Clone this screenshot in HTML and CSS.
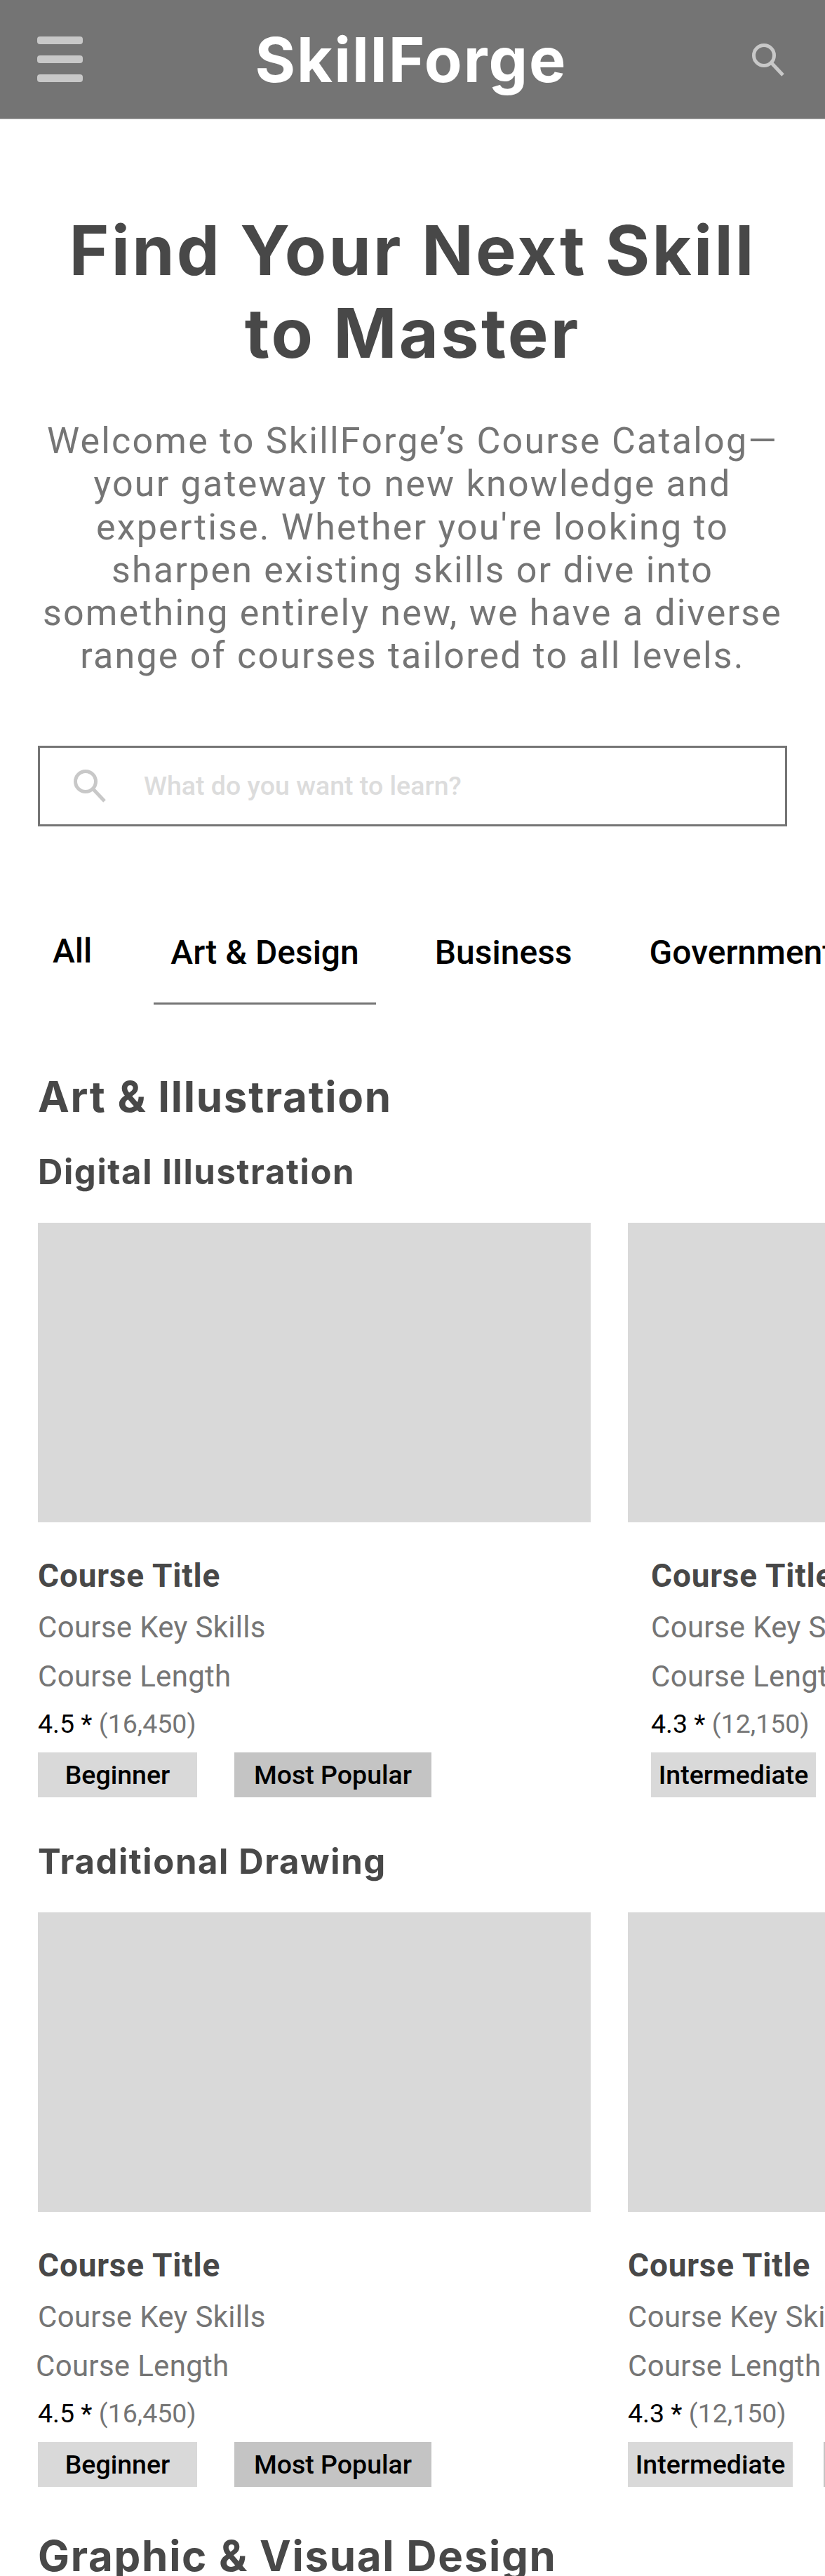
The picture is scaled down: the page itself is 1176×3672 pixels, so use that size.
FILE: index.html
```html
<!DOCTYPE html>
<html lang="en">
<head>
    <meta charset="UTF-8">
    <meta name="viewport" content="width=device-width, initial-scale=1.0">
    <title>SkillForge - Course Catalog</title>
    <link rel="stylesheet" href="styles.css">
</head>
<body>
    <header class="topbar">
        <button class="menu-btn" aria-label="Menu">
            <span></span>
            <span></span>
            <span></span>
        </button>
        <a href="#" class="logo">SkillForge</a>
        <svg class="topbar-search" viewBox="0 0 50 50" width="50" height="50" aria-label="Search">
            <circle cx="19" cy="19" r="14.5"></circle>
            <line x1="29.5" y1="29.5" x2="46" y2="47"></line>
        </svg>
    </header>

    <main>
        <section class="hero">
            <h1>Find Your Next Skill<br>to Master</h1>
            <p>Welcome to SkillForge’s Course Catalog—<br>your gateway to new knowledge and<br>expertise. Whether you're looking to<br>sharpen existing skills or dive into<br>something entirely new, we have a diverse<br>range of courses tailored to all levels.</p>
        </section>

        <form class="search-box">
            <svg viewBox="0 0 50 50" width="50" height="50">
                <circle cx="19" cy="19" r="14.5"></circle>
                <line x1="29.5" y1="29.5" x2="46" y2="47"></line>
            </svg>
            <input type="text" placeholder="What do you want to learn?">
        </form>

        <nav class="tabs">
            <a href="#" class="tab tab-all">All</a>
            <a href="#" class="tab tab-active">Art &amp; Design</a>
            <a href="#" class="tab">Business</a>
            <a href="#" class="tab">Government</a>
        </nav>

        <section class="category">
            <h2>Art &amp; Illustration</h2>

            <h3>Digital Illustration</h3>
            <div class="course-row">
                <article class="course-card">
                    <div class="course-thumb"></div>
                    <div class="course-info">
                        <h4>Course Title</h4>
                        <p class="course-meta">Course Key Skills</p>
                        <p class="course-meta">Course Length</p>
                        <p class="course-rating">4.5 * <span>(16,450)</span></p>
                        <div class="course-tags">
                            <span class="tag tag-level">Beginner</span>
                            <span class="tag tag-popular">Most Popular</span>
                        </div>
                    </div>
                </article>
                <article class="course-card">
                    <div class="course-thumb"></div>
                    <div class="course-info course-info-inset">
                        <h4>Course Title</h4>
                        <p class="course-meta">Course Key Skills</p>
                        <p class="course-meta">Course Length</p>
                        <p class="course-rating">4.3 * <span>(12,150)</span></p>
                        <div class="course-tags">
                            <span class="tag tag-level tag-tight">Intermediate</span>
                        </div>
                    </div>
                </article>
            </div>

            <h3>Traditional Drawing</h3>
            <div class="course-row">
                <article class="course-card">
                    <div class="course-thumb"></div>
                    <div class="course-info">
                        <h4>Course Title</h4>
                        <p class="course-meta">Course Key Skills</p>
                        <p class="course-meta course-meta-shift">Course Length</p>
                        <p class="course-rating">4.5 * <span>(16,450)</span></p>
                        <div class="course-tags">
                            <span class="tag tag-level">Beginner</span>
                            <span class="tag tag-popular">Most Popular</span>
                        </div>
                    </div>
                </article>
                <article class="course-card">
                    <div class="course-thumb"></div>
                    <div class="course-info">
                        <h4>Course Title</h4>
                        <p class="course-meta">Course Key Skills</p>
                        <p class="course-meta">Course Length</p>
                        <p class="course-rating">4.3 * <span>(12,150)</span></p>
                        <div class="course-tags course-tags-tight">
                            <span class="tag tag-level tag-tight">Intermediate</span>
                            <span class="tag tag-popular">Most Popular</span>
                        </div>
                    </div>
                </article>
            </div>
        </section>

        <section class="category">
            <h2>Graphic &amp; Visual Design</h2>
        </section>
    </main>
</body>
</html>
```

FILE: styles.css
```css
:root {
    --header: #747474;
    --heading: #484848;
    --muted: #757575;
    --placeholder: #dcdcdc;
    --icon: #c8c8c8;
    --thumb: #d9d9d9;
    --tag-dark: #c4c4c4;
}

* {
    margin: 0;
    padding: 0;
    box-sizing: border-box;
}

html, body {
    height: 3672px;
    overflow: hidden;
}

body {
    font-family: Roboto, sans-serif;
    background: #ffffff;
    color: #000000;
}

.topbar {
    height: 170px;
    background: var(--header);
    border-bottom: 1px solid #adadad;
    display: flex;
    align-items: center;
    justify-content: space-between;
    padding: 0 56px 0 53px;
}

.menu-btn {
    width: 65px;
    background: none;
    border: none;
    display: flex;
    flex-direction: column;
    gap: 16px;
}

.menu-btn span {
    display: block;
    height: 11px;
    border-radius: 4px;
    background: var(--icon);
}

.logo {
    font-family: Inter, sans-serif;
    font-size: 88px;
    font-weight: 700;
    letter-spacing: 2px;
    color: #ffffff;
    text-decoration: none;
    margin-right: 16px;
}

.topbar-search circle,
.topbar-search line,
.search-box circle,
.search-box line {
    fill: none;
    stroke: var(--icon);
    stroke-width: 5;
}

.hero {
    padding-top: 128px;
    text-align: center;
}

.hero h1 {
    font-family: Inter, sans-serif;
    font-size: 97px;
    font-weight: 700;
    line-height: 118px;
    letter-spacing: 3.2px;
    color: var(--heading);
}

.hero p {
    margin-top: 64px;
    font-size: 52px;
    line-height: 61.3px;
    letter-spacing: 2.2px;
    color: var(--muted);
}

.search-box {
    margin: 97px 54px 0;
    height: 115px;
    border: 3px solid var(--muted);
    display: flex;
    align-items: center;
    padding-left: 46px;
}

.search-box svg {
    flex-shrink: 0;
    margin-right: 52px;
}

.search-box input {
    flex: 1;
    border: none;
    outline: none;
    background: none;
    font-family: Roboto, sans-serif;
    font-size: 37.5px;
    font-weight: 500;
}

.search-box input::placeholder {
    color: var(--placeholder);
    opacity: 1;
}

.tabs {
    margin-top: 152px;
    padding-left: 51px;
    display: flex;
    white-space: nowrap;
}

.tab {
    font-size: 48px;
    font-weight: 500;
    line-height: 56px;
    color: #000000;
    text-decoration: none;
    padding: 0 24px 43px;
    margin-right: 62px;
}

.tab-all {
    margin-right: 64px;
    margin-top: -2px;
}

.tab-active {
    border-bottom: 3px solid var(--muted);
    margin-right: 60px;
}

.category {
    padding-left: 54px;
}

.category h2 {
    font-family: Inter, sans-serif;
    font-size: 60px;
    font-weight: 700;
    line-height: 70px;
    letter-spacing: 1.7px;
    color: var(--heading);
    margin-top: 96px;
}

.category + .category h2 {
    margin-top: 63px;
}

.category h3 {
    font-family: Inter, sans-serif;
    font-size: 49px;
    font-weight: 700;
    line-height: 56px;
    letter-spacing: 1.6px;
    color: var(--heading);
    margin-top: 45px;
}

.course-row + h3 {
    margin-top: 64px;
}

.course-row {
    margin-top: 44px;
    display: flex;
    gap: 53px;
}

.course-card {
    flex: 0 0 788px;
}

.course-thumb {
    height: 427px;
    background: var(--thumb);
}

.course-info {
    padding-top: 49px;
}

.course-info-inset {
    padding-left: 33px;
}

.course-info h4 {
    font-size: 46px;
    font-weight: 700;
    line-height: 54px;
    letter-spacing: 0.8px;
    color: var(--heading);
    margin-bottom: 12px;
}

.course-meta {
    font-size: 42px;
    line-height: 70px;
    letter-spacing: 0.3px;
    color: var(--muted);
}

.course-meta-shift {
    margin-left: -3px;
}

.course-rating {
    font-size: 37.5px;
    line-height: 46px;
    margin-top: 9px;
}

.course-rating span {
    color: var(--muted);
}

.course-tags {
    margin-top: 18px;
    display: flex;
    gap: 53px;
    white-space: nowrap;
}

.course-tags-tight {
    gap: 44px;
}

.tag {
    height: 64px;
    display: flex;
    align-items: center;
    justify-content: center;
    font-size: 37.5px;
    font-weight: 500;
}

.tag-level {
    background: var(--thumb);
    width: 227px;
}

.tag-tight {
    width: 235px;
}

.tag-popular {
    background: var(--tag-dark);
    width: 281px;
}
```
